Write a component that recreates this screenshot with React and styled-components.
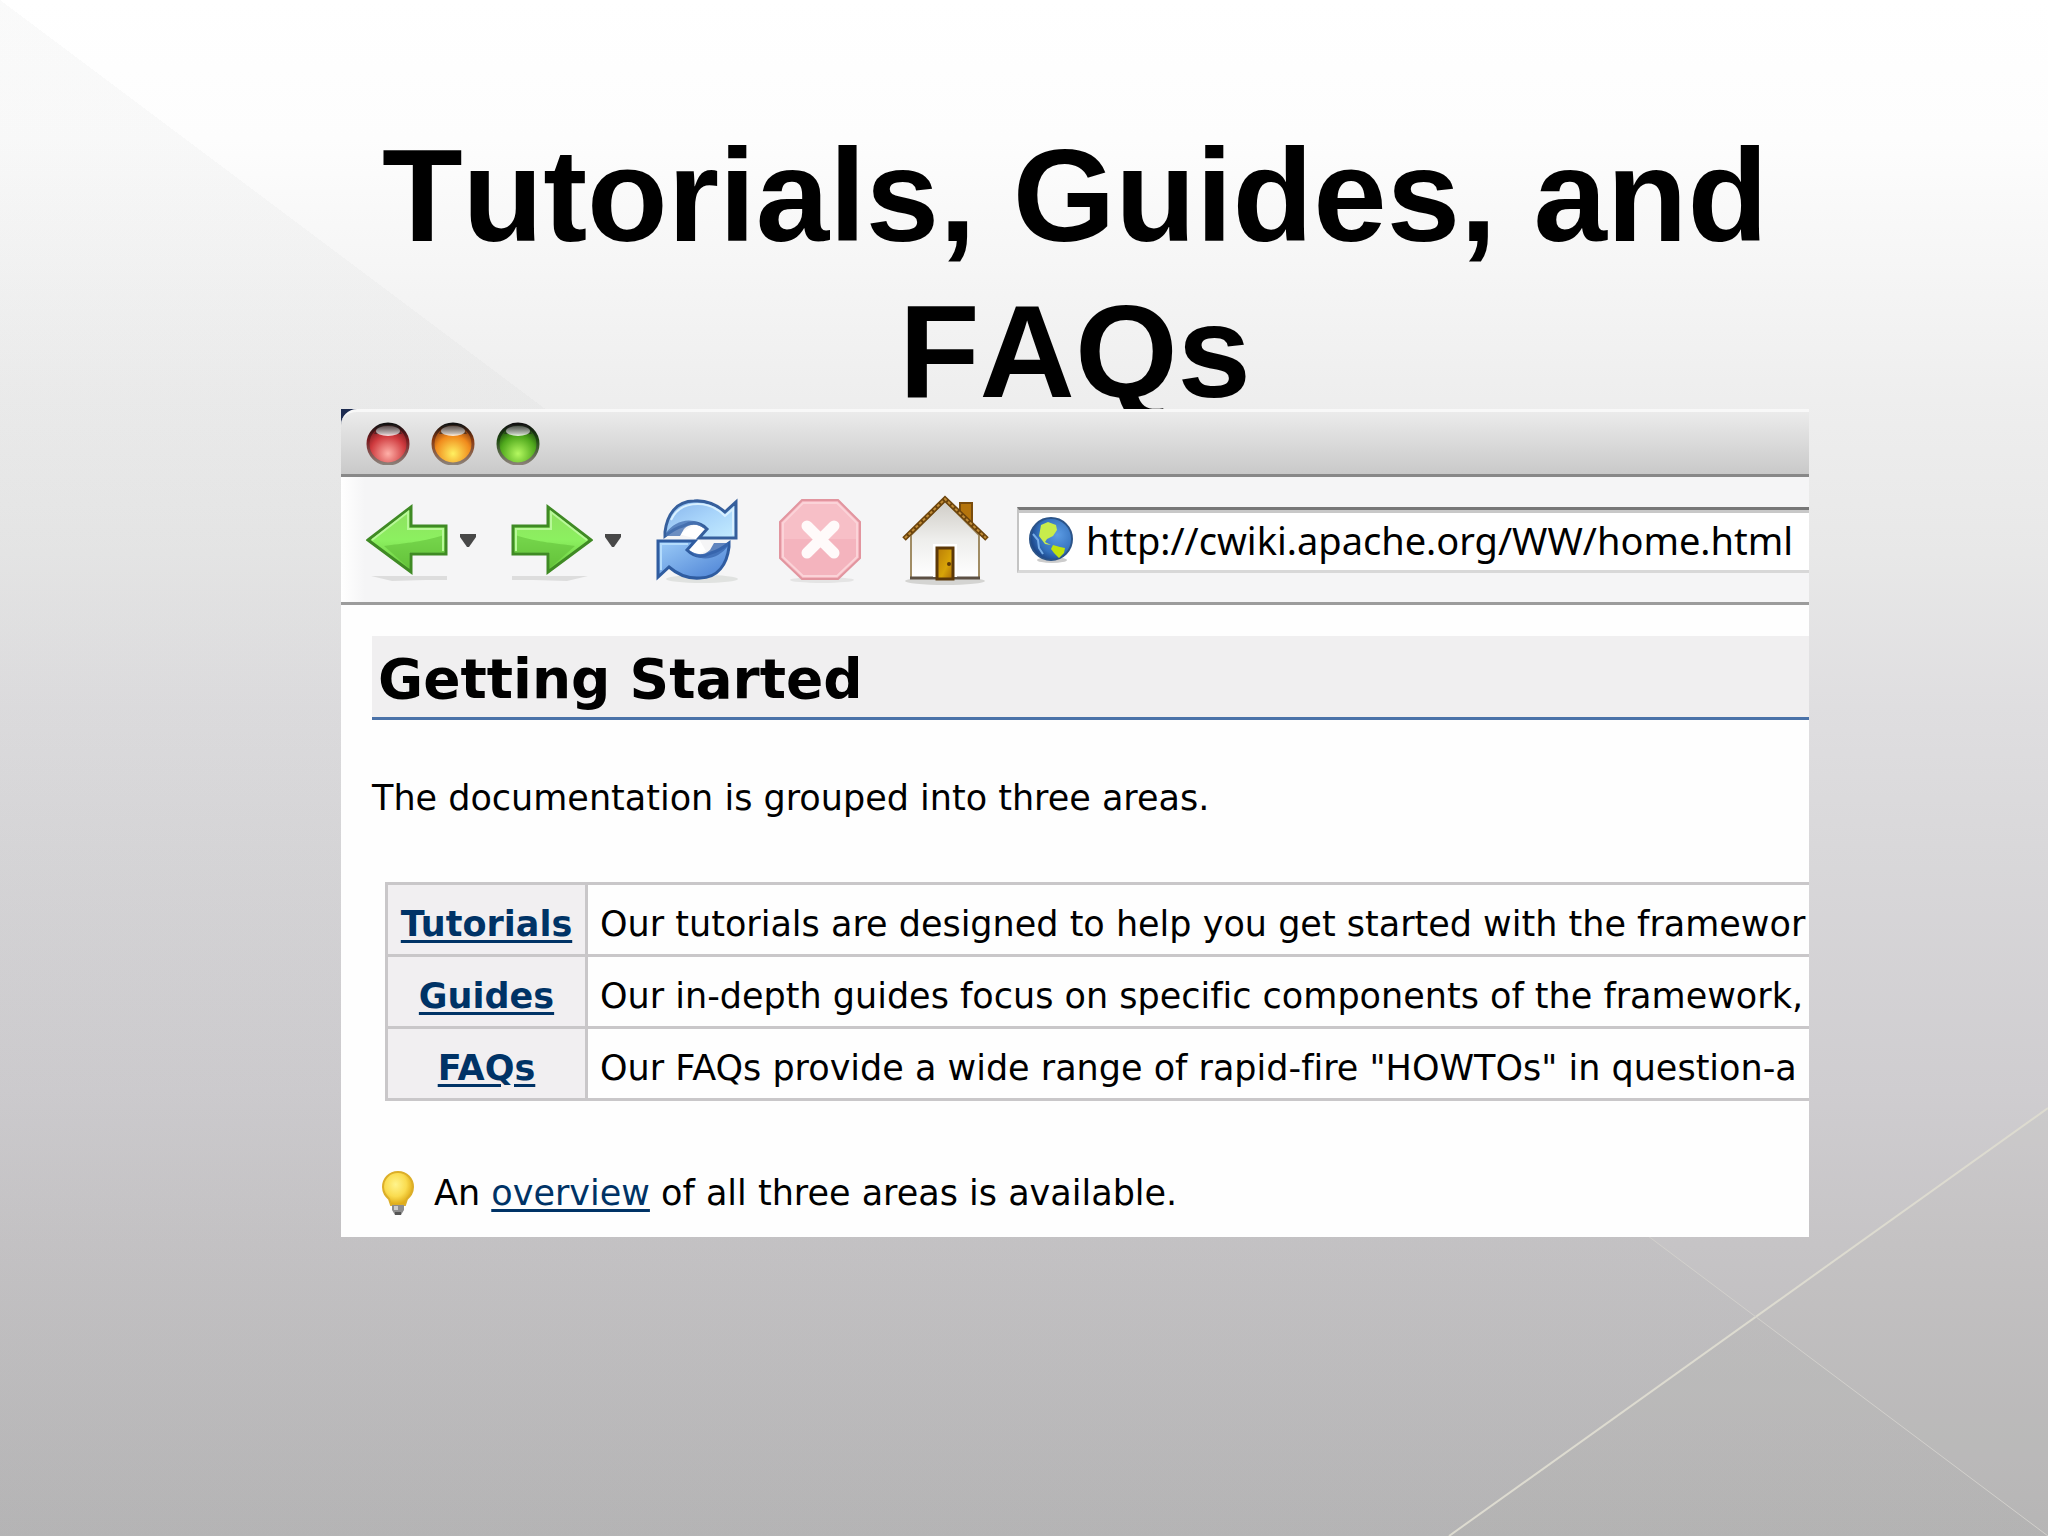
import React from 'react';
import styled, { createGlobalStyle } from 'styled-components';

const GlobalStyle = createGlobalStyle`
    *, *::before, *::after {
        box-sizing: border-box;
    }
    body {
        margin: 0;
    }
`;

const Slide = styled.main`
    position: relative;
    display: grid;
    grid-template-columns: 341fr 1468fr 239fr;
    align-content: start;
    min-height: 100vh;
    padding: 118px 0;
    overflow: hidden;
    background:
        linear-gradient(to bottom left, rgba(110, 118, 118, 0) 50%, rgba(110, 118, 118, .035) 50%),
        linear-gradient(#fff 0%, #fdfdfd 9%, #eee 26%, #e8e8e8 36%, #dfdee0 46%, #d9d8da 55%, #cfcdd0 71%, #c6c4c6 81%, #b7b6b7 100%);
`;

const Rays = styled.svg`
    position: absolute;
    inset: 0;
    width: 100%;
    height: 100%;
`;

const Column = styled.div`
    position: relative;
    grid-column: 2;
    min-width: 0;
`;

const Title = styled.h1`
    margin: 0 0 -21px;
    font: bold 132px/156px "Liberation Sans", Arial, sans-serif;
    font-kerning: none;
    text-align: center;
    color: #000;
`;

const Window = styled.section`
    position: relative;
    overflow: hidden;
    background: #1c2b50;
`;

const TitleBar = styled.div`
    display: flex;
    gap: 21px;
    padding: 10px 25px 9px;
    border-top: 3px solid #f8f8f8;
    border-bottom: 3px solid #888;
    border-top-left-radius: 16px;
    background: linear-gradient(#ebebeb, #c9c9c9);
`;

const IconButton = styled.button`
    display: flex;
    padding: 0;
    border: 0;
    background: none;
`;

const ToolBar = styled.div`
    display: flex;
    align-items: center;
    gap: 28px;
    padding: 16px 0 15px 25px;
    border-bottom: 3px solid #9c9c9c;
    background: linear-gradient(90deg, #fff, #f5f5f6 24px);
`;

const Group = styled.div`
    display: flex;
    align-items: center;
    flex-shrink: 0;
    gap: ${props => props.$gap}px;
`;

const Address = styled.label`
    display: flex;
    align-items: center;
    flex: 1;
    gap: 12px;
    height: 66px;
    min-width: 0;
    padding-left: 10px;
    border-top: 3px solid #777;
    border-left: 2px solid #c4c4c4;
    border-bottom: 3px solid #d8d8d8;
    background: #fff;
    box-shadow: inset 0 3px #c8c8c8;
`;

const AddressInput = styled.input`
    flex: 1;
    min-width: 0;
    padding: 0;
    border: 0;
    outline: 0;
    background: none;
    font: 38px/54px "Noto Sans", sans-serif;
    color: #000;
`;

const Page = styled.div`
    padding: 31px 0 20px 31px;
    background: #fefefe;
    font: 35px/48px "DejaVu Sans", Verdana, sans-serif;
    font-variant-ligatures: none;
    color: #000;
    white-space: nowrap;
`;

const Heading = styled.h2`
    margin: 0;
    padding: 6px 6px 0;
    border-bottom: 3px solid #4a72a8;
    background: #f0eff0;
    font-size: 55px;
    line-height: 75px;
`;

const Intro = styled.p`
    margin: 54px 0 60px;
`;

// wider than the page on purpose, the right border runs out of the window
const Areas = styled.table`
    width: 100%;
    margin-left: 13px;
    border-collapse: collapse;
    font-size: 35px;

    th, td {
        padding: 15px 0 6px 12px;
        border: 3px solid #c9c7c9;
        text-align: left;
    }

    th {
        width: 200px;
        padding-right: 12px;
        background: #f1eff1;
        text-align: center;
    }
`;

const PageLink = styled.a`
    color: #003366;
    text-decoration-line: underline;
    text-decoration-thickness: 3px;
    text-underline-offset: 4px;
`;

const Tip = styled.p`
    display: flex;
    align-items: center;
    gap: 20px;
    margin: 68px 0 0 10px;
`;

const lights = [
    { name: 'Close', rim: '#7a1a1e', mid: '#cf3a3e', glow: '#ffb0a8' },
    { name: 'Minimize', rim: '#8a3a10', mid: '#f08a1c', glow: '#fff060' },
    { name: 'Zoom', rim: '#1e4a10', mid: '#4fa81c', glow: '#b4f860' },
];

const areas = [
    { name: 'Tutorials', text: 'Our tutorials are designed to help you get started with the framewor' },
    { name: 'Guides', text: 'Our in-depth guides focus on specific components of the framework,' },
    { name: 'FAQs', text: 'Our FAQs provide a wide range of rapid-fire "HOWTOs" in question-a' },
];

const Light = ({ name, rim, mid, glow }) => (
    <IconButton type="button" aria-label={name}>
        <svg width="44" height="43" viewBox="0 0 44 43">
            <defs>
                <radialGradient id={`glow-${name}`} cx=".5" cy=".74" r=".68">
                    <stop offset="0" stopColor={glow} />
                    <stop offset=".65" stopColor={mid} />
                    <stop offset="1" stopColor={rim} />
                </radialGradient>
                <linearGradient id={`rim-${name}`} x1="0" y1="0" x2="0" y2="1">
                    <stop offset="0" stopColor="#111" />
                    <stop offset=".4" stopColor={rim} />
                    <stop offset="1" stopColor="#8a8078" />
                </linearGradient>
                <linearGradient id={`shine-${name}`} x1="0" y1="0" x2="0" y2="1">
                    <stop offset="0" stopColor="#666" stopOpacity=".7" />
                    <stop offset="1" stopColor="#fff" stopOpacity=".85" />
                </linearGradient>
            </defs>
            <circle cx="22" cy="22" r="20" fill={`url(#glow-${name})`} stroke={`url(#rim-${name})`} strokeWidth="3" />
            <path d="M13 3h18l5 9H8z" fill="#222" opacity=".55" />
            <ellipse cx="22" cy="9" rx="12" ry="5" fill={`url(#shine-${name})`} />
        </svg>
    </IconButton>
);

const Arrow = ({ name, flip }) => (
    <IconButton type="button" aria-label={name}>
        <svg width="82" height="94" viewBox="0 0 82 94">
            <defs>
                <linearGradient id={`leaf-${name}`} x1="0" y1="0" x2="0" y2="1">
                    <stop offset="0" stopColor="#8fe060" />
                    <stop offset=".5" stopColor="#8cf060" />
                    <stop offset="1" stopColor="#68c83c" />
                </linearGradient>
            </defs>
            <g transform={flip ? 'translate(82 0) scale(-1 1)' : undefined}>
                <path d="M5 83h76v4H60l-34 1z" fill="#ddd" />
                <path
                    d="M2 47L45 14V33H80V61H45V79Z"
                    fill={`url(#leaf-${name})`}
                    stroke="#3f8a24"
                    strokeWidth="3"
                />
                <path d="M18 53C38 50 52 50 78 42V59H43V75Z" fill="#5cb834" opacity=".5" />
                <path d="M6 47L42 19V36H77V58" fill="none" stroke="#b8f898" strokeWidth="2" />
            </g>
        </svg>
    </IconButton>
);

const Caret = ({ label }) => (
    <IconButton type="button" aria-label={label}>
        <svg width="16" height="13" viewBox="0 0 16 13">
            <path d="M0 0H16V3L9 13H7L0 3Z" fill="#484848" />
        </svg>
    </IconButton>
);

const ReloadIcon = () => (
    <svg width="82" height="94" viewBox="0 0 82 94">
        <defs>
            <linearGradient id="reload-top" x1="0" y1="0" x2="1" y2="1">
                <stop offset="0" stopColor="#86b4ec" />
                <stop offset=".5" stopColor="#a8d4fa" />
                <stop offset="1" stopColor="#c4ecff" />
            </linearGradient>
            <linearGradient id="reload-bottom" x1="1" y1="1" x2="0" y2="0">
                <stop offset="0" stopColor="#9cccf8" />
                <stop offset="1" stopColor="#4a80d4" />
            </linearGradient>
        </defs>
        <ellipse cx="46" cy="86" rx="36" ry="4" fill="#e0e2e0" />
        <path d="M23 41L41 30H52V36L43 46L50 58L38 63L30 56L40 46Z" fill="#fff" />
        <path
            d="M9 43V39C11 22 20 8 38 8C51 7 61 12 69 19L80 9V45H43L51 36C44 29 36 28 27 33C19 35 14 39 9 43Z"
            fill="url(#reload-top)"
            stroke="#365f9c"
            strokeWidth="3"
        />
        <path d="M10 40C17 30 31 24 43 30L49 36C42 31 34 30 28 36L24 43H10Z" fill="#4a74b4" opacity=".8" />
        <path d="M15 27C21 14 33 11 42 11C54 11 62 16 69 23L77 16V42" fill="none" stroke="#d8f0ff" strokeWidth="2" />
        <g transform="rotate(180 41 46.5)">
            <path
                d="M9 43V39C11 22 20 8 38 8C51 7 61 12 69 19L80 9V45H43L51 36C44 29 36 28 27 33C19 35 14 39 9 43Z"
                fill="url(#reload-bottom)"
                stroke="#2f5ca0"
                strokeWidth="3"
            />
            <path d="M10 40C17 30 31 24 43 30L49 36C42 31 34 30 28 36L24 43H10Z" fill="#3a68b0" opacity=".8" />
            <path d="M77 16V42H50" fill="none" stroke="#b4dcfc" strokeWidth="2" />
        </g>
    </svg>
);

const StopIcon = () => (
    <svg width="82" height="94" viewBox="0 0 82 94">
        <ellipse cx="43" cy="87" rx="32" ry="3" fill="#e4e4e4" />
        <path d="M23 7H59L81 29V65L59 86H23L1 65V29Z" fill="#f4b4be" stroke="#e2959f" strokeWidth="2" />
        <path d="M24 10H58L78 30V46H4V30Z" fill="#f8c6cd" opacity=".6" />
        <path d="M24 10H58L78 30V64L58 83H24L4 64V30Z" fill="none" stroke="#fbd3d8" strokeWidth="2" />
        <path d="M28 33L55 60M55 33L28 60" stroke="#fffafa" strokeWidth="11" strokeLinecap="round" />
    </svg>
);

const HomeIcon = () => (
    <svg width="87" height="94" viewBox="0 0 87 94">
        <defs>
            <linearGradient id="wall" x1="0" y1="0" x2="0" y2="1">
                <stop offset="0" stopColor="#cfccc6" />
                <stop offset=".5" stopColor="#eeeeec" />
                <stop offset="1" stopColor="#fff" />
            </linearGradient>
            <linearGradient id="door" x1="0" y1="0" x2="1" y2="1">
                <stop offset="0" stopColor="#b87c08" />
                <stop offset=".6" stopColor="#d8a408" />
                <stop offset="1" stopColor="#a86808" />
            </linearGradient>
        </defs>
        <ellipse cx="43" cy="88" rx="40" ry="4" fill="#d4d4d2" />
        <path d="M58 10H70V34L58 23Z" fill="#b4740c" stroke="#7a4c0c" strokeWidth="2" />
        <path d="M9 42L43 8L77 42V85H9Z" fill="url(#wall)" stroke="#a08c64" strokeWidth="2" />
        <path d="M8 85H78" stroke="#5c5044" strokeWidth="3" />
        <path d="M31 84V51H55V84" fill="#fff" />
        <path d="M35 86V55H51V86Z" fill="url(#door)" stroke="#5c3808" strokeWidth="3" />
        <circle cx="47" cy="71" r="2" fill="#5c3808" />
        <path d="M2 46L43 6L85 46" fill="none" stroke="#6c440c" strokeWidth="5" />
        <path d="M3 45L43 6L84 45" fill="none" stroke="#c08c38" strokeWidth="2" strokeDasharray="3 2" />
    </svg>
);

const GlobeIcon = styled.svg`
    flex-shrink: 0;
`;

const Globe = () => (
    <GlobeIcon width="45" height="46" viewBox="0 0 45 46">
        <defs>
            <radialGradient id="ocean" cx=".65" cy=".4" r=".65">
                <stop offset="0" stopColor="#5c9ce4" />
                <stop offset=".7" stopColor="#3470bc" />
                <stop offset="1" stopColor="#1c4688" />
            </radialGradient>
        </defs>
        <ellipse cx="23" cy="43" rx="15" ry="3" fill="#ccc" />
        <circle cx="22" cy="22" r="21" fill="url(#ocean)" stroke="#2c5488" strokeWidth="2" />
        <path d="M12 8L19 5L27 8L28 13L24 19L18 22L16 25L22 28L16 27L10 19Z" fill="#c8ec4c" />
        <path d="M24 28L31 30L36 31L35 36L30 41L25 36L22 32Z" fill="#c0e40c" />
        <path d="M4 17L9 23L10 31L14 37" fill="none" stroke="#78aee8" strokeWidth="2" />
    </GlobeIcon>
);

const Bulb = () => (
    <svg width="32" height="45" viewBox="0 0 32 45">
        <defs>
            <radialGradient id="bulb" cx=".42" cy=".38" r=".6">
                <stop offset="0" stopColor="#fff48c" />
                <stop offset=".6" stopColor="#fadc50" />
                <stop offset="1" stopColor="#e0ac18" />
            </radialGradient>
        </defs>
        <path
            d="M16 1C25 1 31 8 31 16C31 22 28 25 25 28L23 34H9L7 28C4 25 1 22 1 16C1 8 7 1 16 1Z"
            fill="url(#bulb)"
            stroke="#dcae28"
            strokeWidth="2"
        />
        <path d="M10 34H22V39L19 44H13L10 39Z" fill="#8c8c8c" />
        <path d="M12 35H16V39H12Z" fill="#ccc" />
        <path d="M13 41H19V44H13Z" fill="#555" />
    </svg>
);

const App = () => (
    <Slide>
        <GlobalStyle />
        <Rays viewBox="0 0 2048 1536" preserveAspectRatio="none" aria-hidden="true">
            <path d="M1449 1536L2048 1108V1536Z" fill="#b0b098" opacity=".06" />
            <path d="M1449 1536L2048 1108" stroke="#dddbd0" strokeWidth="2" />
            <path d="M1640 1230L2048 1536" stroke="#d2d0cc" strokeWidth="1" />
        </Rays>
        <Column>
            <Title>Tutorials, Guides, and FAQs</Title>
            <Window>
                <TitleBar>
                    {lights.map(light => <Light key={light.name} {...light} />)}
                </TitleBar>
                <ToolBar>
                    <Group $gap={41}>
                        <Group $gap={35}>
                            <Group $gap={12}>
                                <Arrow name="Back" />
                                <Caret label="Back history" />
                            </Group>
                            <Group $gap={12}>
                                <Arrow name="Forward" flip />
                                <Caret label="Forward history" />
                            </Group>
                            <IconButton type="button" aria-label="Reload"><ReloadIcon /></IconButton>
                        </Group>
                        <IconButton type="button" aria-label="Stop"><StopIcon /></IconButton>
                        <IconButton type="button" aria-label="Home"><HomeIcon /></IconButton>
                    </Group>
                    <Address>
                        <Globe />
                        <AddressInput
                            type="text"
                            aria-label="Address"
                            defaultValue="http://cwiki.apache.org/WW/home.html"
                        />
                    </Address>
                </ToolBar>
                <Page>
                    <Heading>Getting Started</Heading>
                    <Intro>The documentation is grouped into three areas.</Intro>
                    <Areas>
                        <tbody>
                            {areas.map(area => (
                                <tr key={area.name}>
                                    <th scope="row"><PageLink href="#">{area.name}</PageLink></th>
                                    <td>{area.text}</td>
                                </tr>
                            ))}
                        </tbody>
                    </Areas>
                    <Tip>
                        <Bulb />
                        <span>
                            An <PageLink href="#">overview</PageLink> of all three areas is available.
                        </span>
                    </Tip>
                </Page>
            </Window>
        </Column>
    </Slide>
);

export default App;
